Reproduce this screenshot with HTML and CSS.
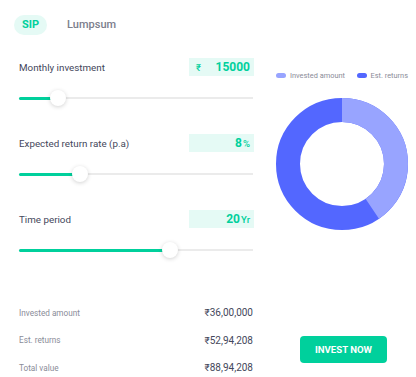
FILE: index.html
```html
<!DOCTYPE html>
<html>
<head>
<meta charset="utf-8">
<link rel="stylesheet" href="styles.css">
</head>
<body>
<div class="page">
  <div class="left">
    <div class="tabs">
      <div class="tab active">SIP</div>
      <div class="tab">Lumpsum</div>
    </div>
    <div class="field">
      <div class="field-head">
        <span class="label">Monthly investment</span>
        <div class="input"><span class="prefix">₹</span><span class="val">15000</span></div>
      </div>
      <div class="slider"><div class="fill" style="width:16.7%"></div><div class="thumb" style="left:16.7%"></div></div>
    </div>
    <div class="field">
      <div class="field-head">
        <span class="label">Expected return rate (p.a)</span>
        <div class="input"><span class="val">8<small>%</small></span></div>
      </div>
      <div class="slider"><div class="fill" style="width:26.2%"></div><div class="thumb" style="left:26.2%"></div></div>
    </div>
    <div class="field">
      <div class="field-head">
        <span class="label">Time period</span>
        <div class="input"><span class="val">20<small>Yr</small></span></div>
      </div>
      <div class="slider"><div class="fill" style="width:64.4%"></div><div class="thumb" style="left:64.4%"></div></div>
    </div>
    <div class="results">
      <div class="row"><span class="rl">Invested amount</span><span class="rv">₹36,00,000</span></div>
      <div class="row"><span class="rl">Est. returns</span><span class="rv">₹52,94,208</span></div>
      <div class="row"><span class="rl">Total value</span><span class="rv">₹88,94,208</span></div>
    </div>
  </div>
  <div class="right">
    <div class="legend">
      <span class="lg"><i class="dot light"></i>Invested amount</span>
      <span class="lg"><i class="dot dark"></i>Est. returns</span>
    </div>
    <svg class="donut" width="132" height="132" viewBox="0 0 132 132">
      <circle cx="66" cy="66" r="54" fill="none" stroke="#5367ff" stroke-width="24"/>
      <circle cx="66" cy="66" r="54" fill="none" stroke="#98a4ff" stroke-width="24" stroke-dasharray="137.3 339.3" transform="rotate(-90 66 66)"/>
    </svg>
    <button class="invest">INVEST NOW</button>
  </div>
</div>
</body>
</html>
```

FILE: styles.css
```css
* { box-sizing: border-box; }
html, body { margin: 0; padding: 0; background: #fff; }
body { font-family: Roboto, "Noto Sans", Arial, sans-serif; color: #44475b; }
.page { display: flex; padding: 15px 0 0 19px; }
.left { width: 234px; }
.tabs { display: flex; align-items: center; height: 20px; margin-left: -5px; gap: 8px; }
.tab { font-size: 11px; font-weight: 500; color: #7c7e8c; padding: 0 12px; height: 20px; line-height: 20px; border-radius: 10px; }
.tab.active { background: #e5faf5; color: #00d09c; font-weight: 700; padding: 0 8px; }
.field { margin-top: 23px; }
.field + .field { margin-top: 28px; }
.field-head { display: flex; justify-content: space-between; align-items: center; height: 18px; }
.label { font-size: 9.8px; color: #44475b; }
.input { width: 65px; height: 18px; background: #e5faf5; display: flex; align-items: center; justify-content: space-between; padding: 0 4px 0 7px; color: #00d09c; font-weight: 700; font-size: 12px; margin-right: -1px; }
.input .val { margin-left: auto; }
.input small { font-size: 9.5px; font-weight: 500; margin-left: 1px; }
.prefix { font-size: 9.5px; font-weight: 500; }
.slider { position: relative; height: 16px; margin-top: 14px; }
.slider::before { content: ""; position: absolute; left: 0; right: 0; top: 7px; height: 2px; background: #ebebeb; }
.fill { position: absolute; left: 0; top: 6.5px; height: 3px; background: #00d09c; border-radius: 2px; }
.thumb { position: absolute; top: 0; width: 16px; height: 16px; margin-left: -8px; border-radius: 50%; background: #fff; box-shadow: 0 1px 4px rgba(0,0,0,0.18); }
.results { margin-top: 41px; }
.row { display: flex; justify-content: space-between; align-items: center; height: 27.5px; }
.rl { font-size: 8.2px; color: #8a8c98; }
.rv { font-size: 10px; color: #44475b; }
.right { margin-left: 23px; width: 132px; display: flex; flex-direction: column; align-items: center; }
.legend { display: flex; justify-content: space-between; width: 132px; margin-top: 54px; height: 12px; align-items: center; font-size: 7.4px; color: #8a8c98; }
.lg { display: flex; align-items: center; }
.dot { display: inline-block; width: 10px; height: 5px; border-radius: 3px; margin-right: 4px; }
.dot.light { background: #98a4ff; }
.dot.dark { background: #5367ff; }
.donut { margin-top: 17px; display: block; }
.invest { margin-top: 106px; width: 87px; height: 27px; border: none; border-radius: 4px; background: #00d09c; color: #fff; font-family: Roboto, Arial, sans-serif; font-weight: 700; font-size: 9.6px; padding: 0; margin-left: 3px; }
```
